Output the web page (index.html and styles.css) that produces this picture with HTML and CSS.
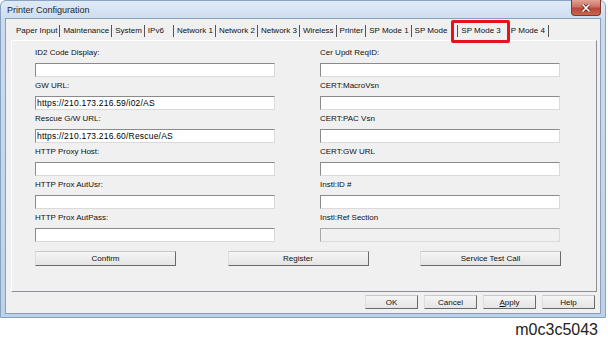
FILE: index.html
```html
<!DOCTYPE html>
<html lang="en">
<head>
    <meta charset="UTF-8">
    <title>Printer Configuration</title>
    <link rel="stylesheet" href="styles.css">
</head>
<body>
    <div class="window">
        <div class="titlebar">
            <span class="title">Printer Configuration</span>
            <div class="close">
                <svg width="10" height="8" viewBox="0 0 10 8">
                    <path d="M1.5 0.5 L8.5 7.5 M8.5 0.5 L1.5 7.5" stroke="#5a1a14" stroke-width="3"/>
                    <path d="M1.5 0.5 L8.5 7.5 M8.5 0.5 L1.5 7.5" stroke="#fff" stroke-width="1.6"/>
                </svg>
            </div>
        </div>

        <div class="client">
            <!-- pestañas -->
            <div class="tabs">
                <span class="tab">Paper Input</span>
                <span class="tab">Maintenance</span>
                <span class="tab">System</span>
                <span class="tab tab-ipv6">IPv6</span>
                <span class="tab">Network 1</span>
                <span class="tab">Network 2</span>
                <span class="tab">Network 3</span>
                <span class="tab">Wireless</span>
                <span class="tab">Printer</span>
                <span class="tab">SP Mode 1</span>
                <span class="tab tab-spmode">SP Mode</span>
                <span class="tab tab-mark">SP Mode 3</span>
                <span class="tab tab-last">P Mode 4</span>
            </div>

            <div class="panel">
                <div class="fields">
                    <div class="field">
                        <label>ID2 Code Display:</label>
                        <div class="input"></div>
                    </div>
                    <div class="field">
                        <label>Cer Updt ReqID:</label>
                        <div class="input"></div>
                    </div>
                    <div class="field">
                        <label>GW URL:</label>
                        <div class="input">https://210.173.216.59/i02/AS</div>
                    </div>
                    <div class="field">
                        <label>CERT:MacroVsn</label>
                        <div class="input"></div>
                    </div>
                    <div class="field">
                        <label>Rescue G/W URL:</label>
                        <div class="input">https://210.173.216.60/Rescue/AS</div>
                    </div>
                    <div class="field">
                        <label>CERT:PAC Vsn</label>
                        <div class="input"></div>
                    </div>
                    <div class="field">
                        <label>HTTP Proxy Host:</label>
                        <div class="input"></div>
                    </div>
                    <div class="field">
                        <label>CERT:GW URL</label>
                        <div class="input"></div>
                    </div>
                    <div class="field">
                        <label>HTTP Prox AutUsr:</label>
                        <div class="input"></div>
                    </div>
                    <div class="field">
                        <label>Instl:ID #</label>
                        <div class="input"></div>
                    </div>
                    <div class="field">
                        <label>HTTP Prox AutPass:</label>
                        <div class="input"></div>
                    </div>
                    <div class="field">
                        <label>Instl:Ref Section</label>
                        <div class="input disabled"></div>
                    </div>
                </div>

                <div class="actions">
                    <button>Confirm</button>
                    <button>Register</button>
                    <button>Service Test Call</button>
                </div>
            </div>

            <div class="footer">
                <button>OK</button>
                <button>Cancel</button>
                <button><u>A</u>pply</button>
                <button>Help</button>
            </div>
        </div>
    </div>

    <div class="caption">m0c3c5043</div>
</body>
</html>
```

FILE: styles.css
```css
body {
    margin: 0;
    background: #fff;
    font-family: "Liberation Sans", Arial, sans-serif;
    width: 608px;
}
.window {
    width: 606px;
    height: 318px;
    box-sizing: border-box;
    border: 1px solid #8aa2c0;
    border-radius: 6px 6px 0 0;
    padding: 0 4px 4px 4px;
    background: linear-gradient(#dfeaf6, #cbdcef 20px, #bcd2ea);
}
.titlebar {
    height: 17px;
    display: flex;
    justify-content: space-between;
    align-items: flex-start;
}
.title {
    font-size: 9px;
    line-height: 18px;
    padding-left: 2px;
    color: #1e2430;
}
.close {
    width: 30px;
    height: 16px;
    margin-top: -1px;
    box-sizing: border-box;
    border: 1px solid #7a3a32;
    border-top: none;
    border-radius: 0 0 4px 4px;
    background: linear-gradient(#e2a396, #cc7262 45%, #bb463a 55%, #c9664e);
    display: flex;
    align-items: center;
    justify-content: center;
}
.client {
    height: 296px;
    box-sizing: border-box;
    border: 1px solid #8b9fb8;
    background: #f0f0f0;
}
.tabs {
    height: 21px;
    padding-left: 7px;
    display: flex;
    align-items: flex-end;
    font-size: 8px;
    color: #111;
}
.tab {
    height: 12px;
    line-height: 12px;
    margin-bottom: 3px;
    padding: 0 2px 0 3px;
    border-right: 1px solid #555;
    white-space: nowrap;
}
.tab-ipv6 {
    padding-right: 9px;
}
.tab-spmode {
    padding-right: 10px;
}
.tab-mark {
    position: relative;
    padding-right: 7px;
    border-right: none;
}
.tab-mark::after {
    content: "";
    position: absolute;
    left: -7px;
    right: -2px;
    top: -5px;
    bottom: -6px;
    border: 3px solid #e8121a;
    border-radius: 2px;
}
.tab-last {
    padding-right: 3px;
}
.panel {
    height: 252px;
    box-sizing: border-box;
    margin: 0 3px 0 5px;
    border: 1px solid;
    border-color: #fff #8c8f96 #8c8f96 #fff;
    padding: 6px 0 0 23px;
}
.fields {
    display: grid;
    grid-template-columns: 240px 240px;
    column-gap: 45px;
    row-gap: 3px;
}
.field label {
    display: block;
    font-size: 8px;
    line-height: 12px;
    margin-bottom: 4px;
    color: #111;
}
.input {
    height: 14px;
    box-sizing: border-box;
    border: 1px solid;
    border-color: #8a8a8a #dadada #dadada #8a8a8a;
    background: #fff;
    font-size: 8.5px;
    line-height: 12px;
    padding-left: 1px;
    letter-spacing: 0.2px;
    white-space: nowrap;
}
.disabled {
    background: #f0f0f0;
    border-color: #a8a8a8 #dcdcdc #dcdcdc #a8a8a8;
}
button {
    font-family: "Liberation Sans", Arial, sans-serif;
    font-size: 8px;
    color: #111;
    padding: 0;
    height: 15px;
    border: 1px solid;
    border-color: #c8c8c8 #6a6a6a #6a6a6a #dedede;
    border-radius: 0;
    background: linear-gradient(#f5f5f5, #e4e4e4);
}
.actions {
    display: flex;
    justify-content: space-between;
    width: 526px;
    margin-top: 9px;
}
.actions button {
    width: 141px;
}
.footer {
    display: flex;
    justify-content: flex-end;
    gap: 6px;
    margin: 3px 5px 0 0;
}
.footer button {
    width: 53px;
    height: 14px;
}
.caption {
    text-align: right;
    padding-right: 10px;
    margin-top: 3px;
    font-size: 16px;
    line-height: 18px;
    color: #222;
}
```
